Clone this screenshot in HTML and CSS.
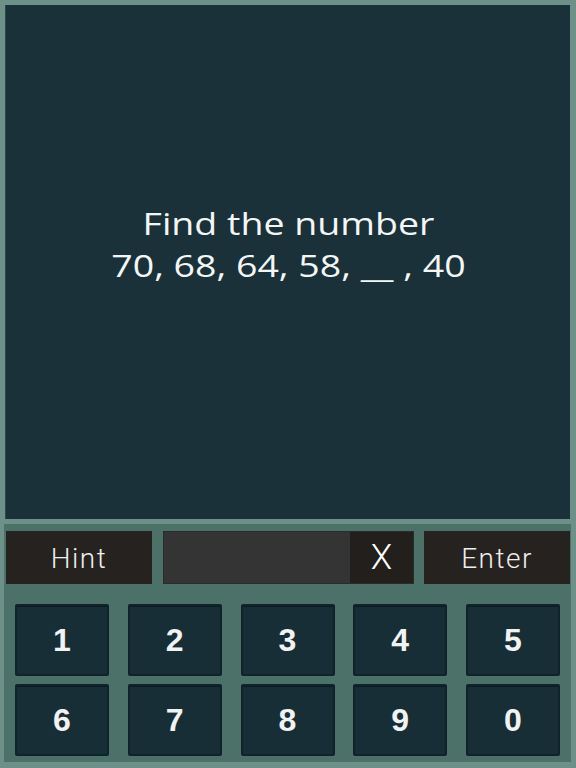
FILE: index.html
```html
<!DOCTYPE html>
<html>
<head>
<meta charset="utf-8">
<link rel="stylesheet" href="styles.css">
</head>
<body>
<div class="app">
  <div class="screen">
    <div class="question">
      <div>Find the number</div>
      <div>70, 68, 64, 58, __ , 40</div>
    </div>
  </div>
  <div class="controls">
    <div class="bar">
      <button class="act">Hint</button>
      <div class="input">
        <div class="field"></div>
        <button class="clear">X</button>
      </div>
      <button class="act">Enter</button>
    </div>
    <div class="keypad">
      <button class="key">1</button>
      <button class="key">2</button>
      <button class="key">3</button>
      <button class="key">4</button>
      <button class="key">5</button>
      <button class="key">6</button>
      <button class="key">7</button>
      <button class="key">8</button>
      <button class="key">9</button>
      <button class="key">0</button>
    </div>
  </div>
</div>
</body>
</html>
```

FILE: styles.css
```css
html, body {
  margin: 0;
  padding: 0;
  background: #6d9088;
}
.app {
  width: 576px;
  height: 768px;
  box-sizing: border-box;
  padding: 5px 6px 6px 5px;
  display: flex;
  flex-direction: column;
  gap: 5px;
}
.screen {
  height: 514px;
  flex: none;
  background: #1a313a;
  border-left: 1px solid #2a4a48;
  display: flex;
  align-items: center;
  justify-content: center;
}
.question {
  color: #f4f6f5;
  font-family: "Open Sans", sans-serif;
  font-weight: 500;
  font-size: 31px;
  line-height: 42px;
  text-align: center;
  margin-top: -36px;
  transform: scaleX(1.21);
}
.controls {
  flex: 1;
  background: #4b7168;
  margin: 0 -1px 0 -1px;
  padding: 7px 1px 0 2px;
}
.bar {
  display: flex;
  gap: 10px;
  height: 53px;
}
button {
  border: none;
  margin: 0;
  padding: 0;
  cursor: pointer;
}
.act {
  width: 146px;
  flex: none;
  background: #25221f;
  color: #eeeeee;
  font-family: "Roboto", sans-serif;
  font-weight: 300;
  font-size: 28px;
  letter-spacing: 1.5px;
  padding-top: 1px;
}
.input {
  flex: 1;
  display: flex;
  background: #343434;
  border: 1px solid #2b2b2b;
  margin-left: 1px;
}
.field {
  flex: 1;
}
.clear {
  width: 63px;
  background: #221f1c;
  color: #ffffff;
  font-family: "Roboto", sans-serif;
  font-weight: 300;
  font-size: 35px;
}
.keypad {
  margin-top: 20px;
  padding: 0 10px 0 9px;
  display: grid;
  grid-template-columns: repeat(5, 94px);
  justify-content: space-between;
  grid-auto-rows: 72px;
  row-gap: 8px;
}
.key {
  background: #172e36;
  border: 2px solid #10222a;
  border-radius: 2px;
  color: #f2f2f2;
  font-family: "Liberation Sans", Arial, sans-serif;
  font-weight: bold;
  font-size: 32px;
  box-shadow: inset 0 1px 0 #0d1b20;
}
```
